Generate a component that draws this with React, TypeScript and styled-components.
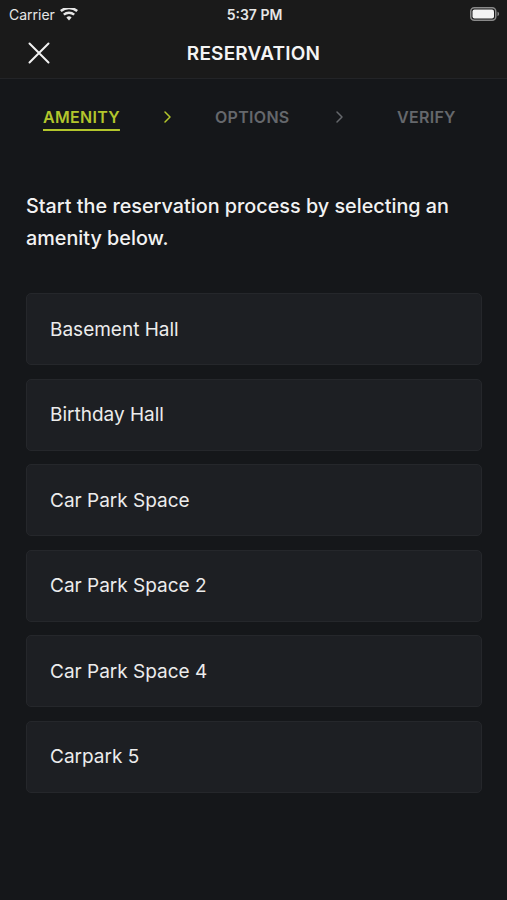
import styled, { createGlobalStyle } from "styled-components";

const GlobalStyle = createGlobalStyle`
  html, body {
    margin: 0;
    padding: 0;
    background: #15171a;
  }
  body {
    font-family: Inter, "Noto Sans", "Liberation Sans", sans-serif;
    -webkit-font-smoothing: antialiased;
  }
`;

const Screen = styled.div`
  width: 507px;
  min-height: 900px;
  background: #15171a;
  color: #f2f2f2;
  display: flex;
  flex-direction: column;
`;

const TopBar = styled.div`
  background: #1a1a1a;
  border-bottom: 1px solid #232427;
`;

const StatusBar = styled.div`
  height: 28px;
  display: grid;
  grid-template-columns: 1fr auto 1fr;
  align-items: center;
  padding: 0 7px 0 9px;
  font-size: 14px;
  color: #e6e6e6;
`;

const Carrier = styled.div`
  display: flex;
  align-items: center;
  gap: 5px;
`;

const Clock = styled.div`
  font-weight: 600;
`;

const Battery = styled.div`
  justify-self: end;
  display: flex;
  align-items: center;
`;

const NavBar = styled.div`
  height: 50px;
  display: flex;
  align-items: center;
  justify-content: center;
  position: relative;
`;

const CloseButton = styled.button`
  position: absolute;
  left: 24px;
  top: 50%;
  transform: translateY(-50%);
  background: none;
  border: none;
  padding: 4px;
  display: flex;
`;

const Title = styled.h1`
  margin: 0;
  font-size: 19px;
  font-weight: 600;
  letter-spacing: 0.2px;
  color: #f4f4f4;
`;

const Steps = styled.div`
  display: flex;
  align-items: center;
  height: 73px;
  padding: 1px 0 0 43px;
`;

const Step = styled.span<{ $active?: boolean; $width: number }>`
  font-size: 16px;
  font-weight: 600;
  letter-spacing: 0.3px;
  color: ${(p) => (p.$active ? "#b3c62c" : "#65686c")};
  width: ${(p) => p.$width}px;
  text-decoration: ${(p) => (p.$active ? "underline" : "none")};
  text-underline-offset: 6px;
  text-decoration-thickness: 2px;
`;

const Chevron = styled.span<{ $active?: boolean; $width: number }>`
  width: ${(p) => p.$width}px;
  display: flex;
  color: ${(p) => (p.$active ? "#b3c62c" : "#65686c")};
`;

const Intro = styled.p`
  margin: 37px 26px 39px;
  font-size: 19.8px;
  line-height: 32px;
  font-weight: 500;
  color: #f2f2f2;
`;

const List = styled.div`
  display: flex;
  flex-direction: column;
  gap: 13.5px;
  padding: 0 25px 0 26px;
`;

const Card = styled.div`
  height: 70px;
  border: 1px solid #25272b;
  border-radius: 5px;
  background: #1d1f23;
  display: flex;
  align-items: center;
  padding: 0 24px 0 23px;
  font-size: 19px;
  color: #ececec;
`;

const ChevronIcon = () => (
  <svg width="9" height="14" viewBox="0 0 9 14" fill="none">
    <path d="M2 2l5 5-5 5" stroke="currentColor" strokeWidth="1.5" strokeLinecap="round" strokeLinejoin="round" />
  </svg>
);

const amenities = [
  "Basement Hall",
  "Birthday Hall",
  "Car Park Space",
  "Car Park Space 2",
  "Car Park Space 4",
  "Carpark 5",
];

export default function App() {
  return (
    <Screen>
      <GlobalStyle />
      <TopBar>
        <StatusBar>
          <Carrier>
            Carrier
            <svg width="18" height="13" viewBox="0 0 18 13">
              <path d="M9 12.5l2.6-3.1a4 4 0 00-5.2 0z" fill="#e6e6e6" />
              <path d="M4.6 7.6a6.8 6.8 0 018.8 0l1.6-1.9a9.3 9.3 0 00-12 0z" fill="#e6e6e6" />
              <path d="M1.6 4a11.4 11.4 0 0114.8 0L18 2.1a13.9 13.9 0 00-18 0z" fill="#e6e6e6" />
            </svg>
          </Carrier>
          <Clock>5:37 PM</Clock>
          <Battery>
            <svg width="30" height="14" viewBox="0 0 30 14">
              <rect x="0.75" y="0.75" width="25" height="12.5" rx="3.5" fill="none" stroke="#8a8a8a" strokeWidth="1.5" />
              <rect x="2.5" y="2.5" width="21.5" height="9" rx="2" fill="#f2f2f2" />
              <path d="M27.5 4.8v4.4c1-.3 1.6-1.2 1.6-2.2s-.6-1.9-1.6-2.2z" fill="#8a8a8a" />
            </svg>
          </Battery>
        </StatusBar>
        <NavBar>
          <CloseButton aria-label="Close">
            <svg width="22" height="22" viewBox="0 0 22 22">
              <path d="M1.5 1.5l19 19M20.5 1.5l-19 19" stroke="#f2f2f2" strokeWidth="2" strokeLinecap="round" />
            </svg>
          </CloseButton>
          <Title>RESERVATION</Title>
        </NavBar>
      </TopBar>

      <Steps>
        <Step $active $width={120}>AMENITY</Step>
        <Chevron $active $width={52}><ChevronIcon /></Chevron>
        <Step $width={120}>OPTIONS</Step>
        <Chevron $width={62}><ChevronIcon /></Chevron>
        <Step $width={80}>VERIFY</Step>
      </Steps>

      <Intro>Start the reservation process by selecting an amenity below.</Intro>

      <List>
        {amenities.map((name) => (
          <Card key={name}>{name}</Card>
        ))}
      </List>
    </Screen>
  );
}
